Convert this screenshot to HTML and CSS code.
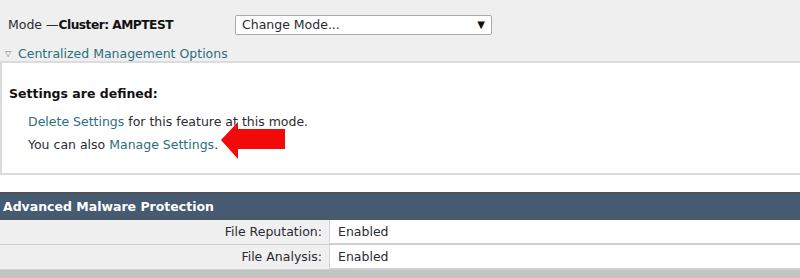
FILE: index.html
```html
<!DOCTYPE html>
<html>
<head>
<meta charset="utf-8">
<link rel="stylesheet" href="styles.css">
</head>
<body>
<div class="top">
  <div class="mode-row">
    <div class="mode-label">Mode —<b>Cluster: AMPTEST</b></div>
    <div class="select"><span>Change Mode...</span><span class="caret">▼</span></div>
  </div>
  <div class="cm-row"><span class="tri">▽</span><a class="link">Centralized Management Options</a></div>
</div>
<div class="settings">
  <div class="settings-title">Settings are defined:</div>
  <div class="settings-body">
    <div class="line"><a class="link">Delete Settings</a> for this feature at this mode.</div>
    <div class="line">You can also <a class="link">Manage Settings</a>.
      <svg class="arrow" width="66" height="40" viewBox="0 0 66 40"><polygon points="0,18 17,0 17,7 64,7 64,27 17,27 17,37" fill="#f20a0a"/></svg>
    </div>
  </div>
</div>
<div class="amp">
  <div class="amp-head">Advanced Malware Protection</div>
  <div class="amp-row"><div class="lab">File Reputation:</div><div class="val">Enabled</div></div>
  <div class="amp-row"><div class="lab">File Analysis:</div><div class="val">Enabled</div></div>
  <div class="amp-foot"></div>
</div>
</body>
</html>
```
FILE: styles.css
```css
html, body { margin: 0; padding: 0; background: #fff; }
body { font-family: "DejaVu Sans", Verdana, sans-serif; font-size: 12px; color: #2b2b33; }
.top { background: #efefef; height: 63px; border-bottom: 2px solid #dcdcdc; box-sizing: border-box; padding: 0 0 0 5px; }
.mode-row { display: flex; align-items: center; height: 46px; padding: 3px 0 0 3px; box-sizing: border-box; }
.mode-label { width: 227px; font-size: 12.5px; }
.mode-label b { color: #111; font-size: 12.2px; letter-spacing: -0.5px; }
.select { width: 243px; height: 18px; border: 1px solid #a9a9a9; background: #fff; display: flex; align-items: center; justify-content: space-between; padding: 0 6px 0 6px; box-sizing: content-box; font-size: 12.5px; border-radius: 2px; }
.caret { font-size: 10px; color: #111; }
.cm-row { display: flex; align-items: center; height: 14px; }
.tri { font-size: 8px; color: #777; width: 13px; }
.link { color: #2c6e80; text-decoration: none; }
.cm-row .link { font-size: 12.5px; }
.settings { border-left: 2px solid #dcdcdc; height: 112px; box-sizing: border-box; border-bottom: 2px solid #dcdcdc; padding: 23px 0 0 7px; }
.settings-title { font-weight: bold; font-size: 12.5px; color: #111; }
.settings-body { padding: 11px 0 0 19px; font-size: 12.5px; }
.line { height: 23px; line-height: 20px; position: relative; }
.arrow { position: absolute; left: 193px; top: -13px; }
.amp { margin-top: 17px; }
.amp-head { background: #465a72; border-top: 2px solid #4f4f59; border-bottom: 1px solid #555; height: 28px; box-sizing: border-box; color: #fff; font-weight: bold; font-size: 12.5px; line-height: 25px; padding-left: 3px; }
.amp-row { display: grid; grid-template-columns: 330px 1fr; height: 25px; border-bottom: 2px solid #cfcfcf; box-sizing: border-box; }
.lab { background: #f0f0f0; text-align: right; padding-right: 7px; line-height: 24px; border-right: 1px solid #d4d4d4; font-size: 12.5px; }
.val { padding-left: 8px; line-height: 24px; font-size: 12.5px; }
.amp-foot { height: 8px; background: #c4c4c4; }
```
